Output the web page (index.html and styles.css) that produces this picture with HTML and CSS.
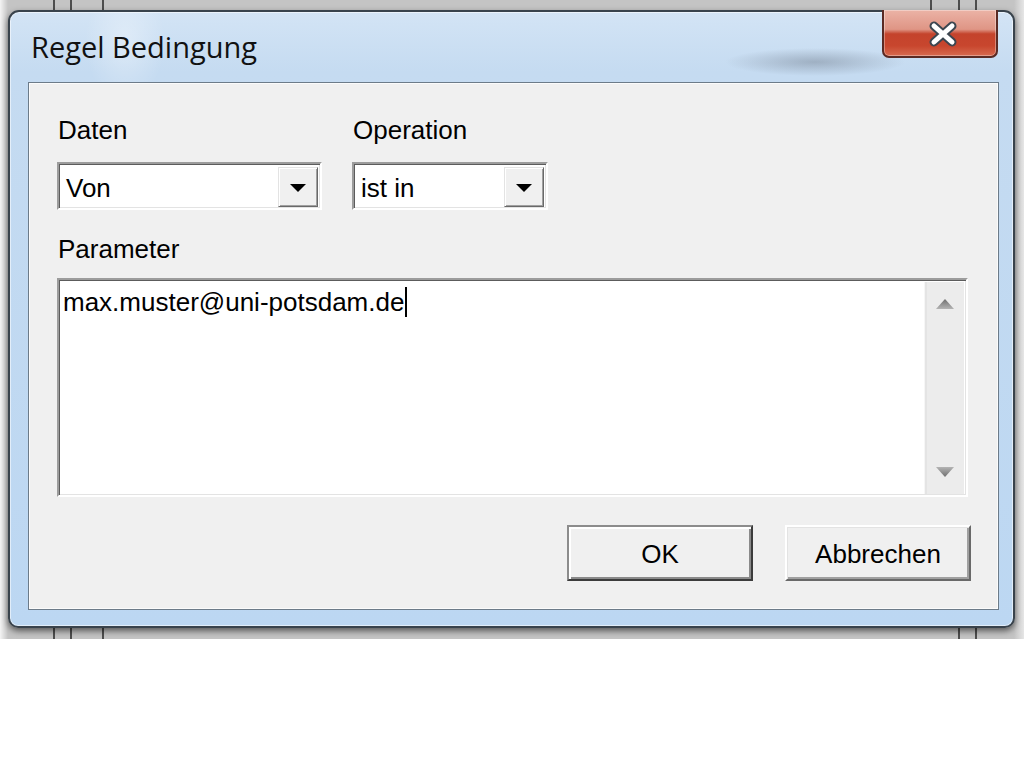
FILE: index.html
```html
<!DOCTYPE html>
<html lang="de">
<head>
<meta charset="utf-8">
<title>Regel Bedingung</title>
<link rel="stylesheet" href="styles.css">
</head>
<body>
<div class="screen">
  <div class="window">
    <div class="titlebar">
      <div class="title">Regel Bedingung</div>
      <div class="close-btn">
        <svg width="34" height="28" viewBox="0 0 34 28">
          <path d="M8 6 L26 22 M26 6 L8 22" stroke="#3c4650" stroke-width="9" stroke-linecap="round" fill="none"/>
          <path d="M8 6 L26 22 M26 6 L8 22" stroke="#ffffff" stroke-width="5" stroke-linecap="round" fill="none"/>
        </svg>
      </div>
    </div>
    <div class="client">
      <div class="fields">
        <div class="field field-daten">
          <div class="label">Daten</div>
          <div class="combo">
            <span class="combo-text">Von</span>
            <span class="drop-btn"><span class="arrow"></span></span>
          </div>
        </div>
        <div class="field field-op">
          <div class="label">Operation</div>
          <div class="combo">
            <span class="combo-text">ist in</span>
            <span class="drop-btn"><span class="arrow"></span></span>
          </div>
        </div>
      </div>
      <div class="label label-param">Parameter</div>
      <div class="memo">
        <div class="memo-text">max.muster@uni-potsdam.de<span class="caret"></span></div>
        <div class="scrollbar">
          <div class="sb-btn">
            <svg width="20" height="12" viewBox="0 0 20 12">
              <defs><linearGradient id="gu" x1="0" y1="0" x2="0" y2="1"><stop offset="0" stop-color="#6e6e6e"/><stop offset="1" stop-color="#b4b4b4"/></linearGradient></defs>
              <polygon points="10,1 19,11 1,11" fill="url(#gu)"/>
            </svg>
          </div>
          <div class="sb-btn">
            <svg width="20" height="12" viewBox="0 0 20 12">
              <defs><linearGradient id="gd" x1="0" y1="0" x2="0" y2="1"><stop offset="0" stop-color="#b4b4b4"/><stop offset="1" stop-color="#6e6e6e"/></linearGradient></defs>
              <polygon points="1,1 19,1 10,11" fill="url(#gd)"/>
            </svg>
          </div>
        </div>
      </div>
      <div class="buttons">
        <div class="btn btn-default">OK</div>
        <div class="btn">Abbrechen</div>
      </div>
    </div>
  </div>
</div>
</body>
</html>
```
FILE: styles.css
```css
html, body {
  margin: 0;
  padding: 0;
  background: #ffffff;
}

.screen {
  box-sizing: border-box;
  width: 1024px;
  height: 639px;
  padding: 10px 9px 11px 8px;
  background:
    linear-gradient(#4e4e4e, #4e4e4e) 53px 0 / 2px 100% no-repeat,
    linear-gradient(#4e4e4e, #4e4e4e) 70px 0 / 2px 100% no-repeat,
    linear-gradient(#4e4e4e, #4e4e4e) 102px 0 / 2px 100% no-repeat,
    linear-gradient(#4e4e4e, #4e4e4e) 930px 0 / 2px 12px no-repeat,
    linear-gradient(#4e4e4e, #4e4e4e) 958px 0 / 2px 100% no-repeat,
    linear-gradient(#4e4e4e, #4e4e4e) 975px 0 / 2px 100% no-repeat,
    linear-gradient(to right, #f4f4f4 0, #c4c4c4 8px, #c4c4c4 1014px, #e6e6e6 1024px);
}

.window {
  box-sizing: border-box;
  height: 618px;
  display: flex;
  flex-direction: column;
  border: 2px solid #39434c;
  border-radius: 11px 11px 10px 10px;
  padding: 0 14px 16px 18px;
  background:
    radial-gradient(ellipse 90px 14px at 805px 50px, rgba(110, 122, 138, 0.45), rgba(110, 122, 138, 0) 100%),
    radial-gradient(ellipse 40px 60px at 115px 30px, rgba(255, 255, 255, 0.35), rgba(255, 255, 255, 0) 100%),
    linear-gradient(to bottom, #d3e4f5 0, #c5dbf1 60px, #bcd7f2 100%);
  box-shadow: inset 0 0 0 1px rgba(255, 255, 255, 0.55), 0 3px 6px rgba(0, 0, 0, 0.55);
}

.titlebar {
  height: 70px;
  flex: none;
  display: flex;
  justify-content: space-between;
  align-items: flex-start;
}

.title {
  font-family: "Open Sans", "Noto Sans", sans-serif;
  font-size: 29px;
  line-height: 36px;
  color: #111;
  padding: 17px 0 0 3px;
}

.close-btn {
  box-sizing: border-box;
  width: 116px;
  height: 48px;
  margin-top: -2px;
  margin-right: 1px;
  border: 2px solid #5a2a24;
  border-top: none;
  border-radius: 0 0 7px 7px;
  background: linear-gradient(to bottom, #ebb3a6 0, #df9585 42%, #c4432c 52%, #c8462e 78%, #d76a4f 100%);
  box-shadow: inset 0 0 0 1px rgba(255, 255, 255, 0.35);
  display: flex;
  align-items: center;
  justify-content: center;
  padding-top: 2px;
}

.close-btn svg {
  display: block;
  margin-left: 6px;
}

.client {
  flex: 1;
  box-sizing: border-box;
  border: 1px solid #6c7b89;
  box-shadow: inset 0 0 0 1px #fbfbfb;
  background: #f0f0f0;
  padding: 32px 27px 28px 28px;
  display: flex;
  flex-direction: column;
  font-family: "Liberation Sans", Arial, sans-serif;
  font-size: 26px;
  line-height: 30px;
  color: #000;
}

.fields {
  display: flex;
  gap: 30px;
}

.field-daten { width: 265px; }
.field-op { width: 196px; }

.label {
  height: 30px;
  margin-bottom: 17px;
  padding-left: 1px;
}

.combo {
  box-sizing: border-box;
  height: 48px;
  display: flex;
  align-items: stretch;
  padding: 1px 2px 0 1px;
  background: #ffffff;
  border: 2px solid;
  border-color: #9c9c9c #ffffff #ffffff #9c9c9c;
  box-shadow: inset 1px 1px 0 #5c5c5c, inset -1px -1px 0 #e3e3e3;
}

.combo-text {
  flex: 1;
  display: flex;
  align-items: center;
  padding-left: 6px;
  padding-top: 2px;
}

.drop-btn {
  box-sizing: border-box;
  width: 40px;
  margin: 2px 0 1px 0;
  background: #f0f0f0;
  border: 1px solid;
  border-color: #e3e3e3 #696969 #696969 #e3e3e3;
  box-shadow: inset 1px 1px 0 #ffffff, inset -1px -1px 0 #a0a0a0;
  display: flex;
  align-items: center;
  justify-content: center;
}

.arrow {
  width: 0;
  height: 0;
  border-left: 8px solid transparent;
  border-right: 8px solid transparent;
  border-top: 8px solid #000;
  margin-top: 2px;
}

.label-param {
  margin-top: 24px;
  margin-bottom: 14px;
}

.memo {
  box-sizing: border-box;
  height: 219px;
  width: 911px;
  display: flex;
  background: #ffffff;
  border: 2px solid;
  border-color: #9c9c9c #ffffff #ffffff #9c9c9c;
  box-shadow: inset 1px 1px 0 #5c5c5c, inset -1px -1px 0 #e3e3e3;
  padding: 2px 2px 1px 2px;
}

.memo-text {
  flex: 1;
  padding: 5px 0 0 2px;
  white-space: nowrap;
}

.caret {
  display: inline-block;
  width: 2px;
  height: 30px;
  background: #000;
  vertical-align: -6px;
  margin-left: 1px;
}

.scrollbar {
  width: 39px;
  display: flex;
  flex-direction: column;
  justify-content: space-between;
  background: linear-gradient(to right, #e4e4e4 0, #e4e4e4 2px, #ececec 2px, #ececec 100%);
  border-left: 1px solid #f6f6f6;
}

.sb-btn {
  height: 44px;
  display: flex;
  align-items: center;
  justify-content: center;
}

.buttons {
  margin-top: 28px;
  display: flex;
  justify-content: flex-end;
  gap: 32px;
}

.btn {
  box-sizing: border-box;
  width: 186px;
  height: 56px;
  display: flex;
  align-items: center;
  justify-content: center;
  background: #f0f0f0;
  border: 2px solid;
  border-color: #ffffff #696969 #696969 #ffffff;
  box-shadow: inset 1px 1px 0 #e3e3e3, inset -2px -2px 0 #a0a0a0;
  padding-top: 1px;
}

.btn-default {
  border-color: #8c8c8c #3c3c3c #3c3c3c #8c8c8c;
  box-shadow: inset 2px 2px 0 #ffffff, inset -2px -2px 0 #8a8a8a;
}
```
